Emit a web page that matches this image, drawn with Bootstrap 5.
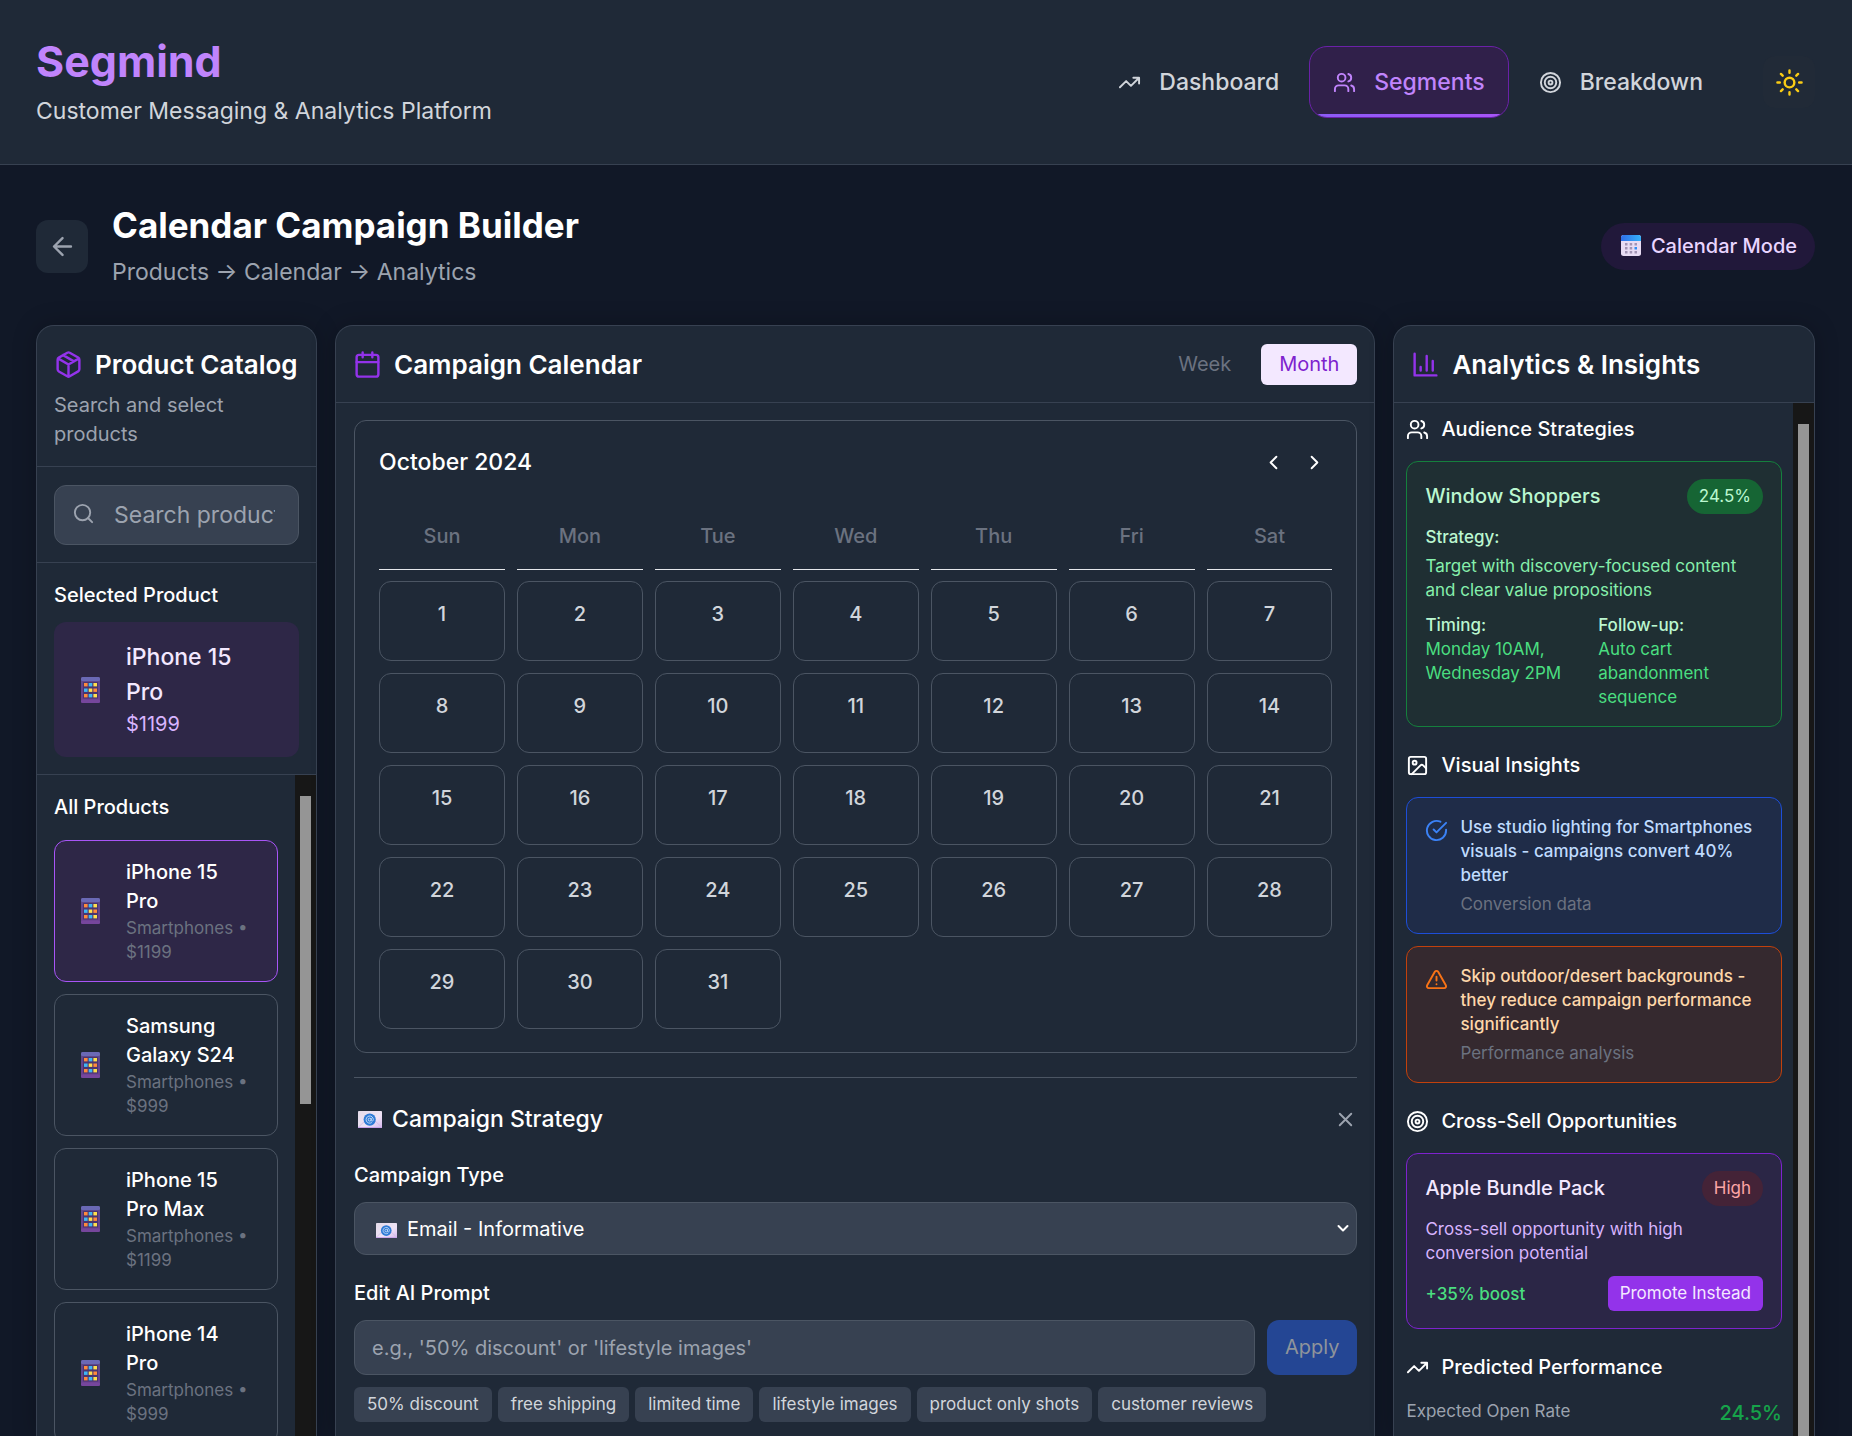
<!DOCTYPE html>
<html lang="en" data-bs-theme="dark">
<head>
<meta charset="utf-8">
<meta name="viewport" content="width=device-width, initial-scale=1">
<title>Segmind</title>
<link href="https://cdn.jsdelivr.net/npm/bootstrap@5.3.0/dist/css/bootstrap.min.css" rel="stylesheet">
<style>
  :root { --line:#374151; --line-2:#4b5563; --panel:#1f2937; --field:#374151; }
  body { font-family:Inter,"Liberation Sans",sans-serif; font-size:23px; line-height:35px; background:#111827; color:#fff; height:100vh; overflow:hidden; }
  h1,h2,h3,h4,p { margin:0; }
  svg { display:block; flex:none; }
  .ico { fill:none; stroke:currentColor; stroke-width:2; stroke-linecap:round; stroke-linejoin:round; }
  .i23 { width:23px; height:23px; }
  .i29 { width:29px; height:29px; }
  .t-sm { font-size:20px; line-height:29px; }
  .t-xs { font-size:17px; line-height:24px; }
  .t-md { font-size:23px; line-height:35px; }
  .t-lg { font-size:26px; line-height:41px; font-weight:600; }
  .gap-6 { gap:6px; } .gap-12 { gap:12px; } .gap-18 { gap:18px; } .gap-24 { gap:24px; }
  .mt-6 { margin-top:6px; } .mt-12 { margin-top:12px; } .mt-17 { margin-top:17px; } .mb-6 { margin-bottom:6px; } .mb-12 { margin-bottom:12px; } .mb-24 { margin-bottom:24px; }
  .c-gray { color:#6b7280; } .c-soft { color:#9ca3af; } .c-light { color:#d1d5db; } .c-violet { color:#9333ea; }
  button { border:0; background:none; color:inherit; padding:0; }

  .site-head { background:#1f2937; border-bottom:1px solid var(--line); padding:35px 37px 35px 36px; }
  .brand { font-size:43px; line-height:53px; font-weight:700; color:#c084fc; }
  .nav-item-link { display:flex; align-items:center; gap:18px; padding:0 23px; border:1px solid transparent; border-radius:18px; color:#d1d5db; font-weight:500; text-decoration:none; position:relative; overflow:hidden; height:72px; }
  .nav-item-link.active { background:#30204a; border-color:#6b21a8; color:#c084fc; }
  .nav-item-link.active::after { content:""; position:absolute; left:0; right:0; bottom:0; height:3px; background:linear-gradient(90deg,#8b5cf6,#a855f7); }
  .theme-btn { width:52px; height:52px; border-radius:12px; background:#212a37; color:#facc15; }
  .head-actions { gap:36px; }

  .main-area { padding:37px 37px 0 36px; gap:35px; min-height:0; }
  .back-btn { width:52px; height:53px; border-radius:12px; background:#1f2937; color:#9ca3af; }
  .page-title { font-size:35px; line-height:47px; font-weight:700; }
  .mode-pill { padding:9px 18px; border-radius:24px; background:#21183a; color:#e9d5ff; font-weight:500; }

  .workspace { min-height:0; }
  .panel { background:var(--panel); border:1px solid var(--line); border-bottom:0; border-radius:18px 18px 0 0; overflow:hidden; min-width:0; box-shadow:0 0 24px rgba(0,0,0,.22); display:flex; flex-direction:column; }
  .panel-l { flex:280 1 0; } .panel-m { flex:1042 1 0; } .panel-r { flex:421 1 0; }
  .sect { padding:18px 17px 17px; border-bottom:1px solid var(--line); }
  .field { background:var(--field); border:1px solid var(--line-2); border-radius:12px; color:#fff; width:100%; outline:0; }
  .field::placeholder { color:#9ca3af; opacity:1; }
  .search-wrap { position:relative; }
  .search-wrap .field { height:60px; padding:0 23px 0 59px; }
  .search-wrap svg { position:absolute; left:18px; top:17px; color:#9ca3af; }
  .picked { background:#2e2747; border-radius:12px; padding:18px 30px 18px 18px; color:#f3e8ff; font-weight:500; }
  .emoji-slot { width:36px; display:flex; justify-content:center; flex:none; }
  .prod { border:1px solid var(--line-2); border-radius:12px; padding:17px 22px 17px 17px; width:100%; text-align:left; flex:none; }
  .prod.active { border-color:#a855f7; background:#2e2747; }
  .track { width:21px; flex:none; background:#171717; padding:21px 5px 0; }
  .thumb { background:#959595; }
  .thumb-short { height:308px; }
  .pane { min-width:0; flex:1 1 0; overflow:hidden; }
  .product-list { padding:18px 17px 0; }

  .tab-btn { padding:6px 18px; border-radius:6px; }
  .tab-btn.active { background:#f3e8ff; color:#7e22ce; }
  .cal-body { padding:17px 17px 0 18px; }
  .cal { border:1px solid var(--line-2); border-radius:12px; padding:24px 24px 23px; }
  .cal-nav button { padding:6px; }
  .cal-grid { display:grid; grid-template-columns:repeat(7,1fr); gap:12px; margin-top:24px; }
  .dow { text-align:center; padding:18px 0; border-bottom:1px solid #e5e7eb; font-weight:500; margin-bottom:-1px; }
  .day { height:80px; border:1px solid var(--line-2); border-radius:12px; text-align:center; padding-top:18px; font-weight:500; }
  .strategy { border-top:1px solid var(--line-2); margin-top:24px; padding-top:24px; }
  .strategy-title { gap:10px; padding-left:4px; }
  .select-wrap { position:relative; }
  .select-wrap .field { appearance:none; height:53px; padding:2px 48px 0 52px; }
  .select-wrap .mail { position:absolute; left:22px; top:21px; }
  .select-wrap .chev { position:absolute; right:8px; top:22px; }
  .prompt-row .field { height:55px; padding:0 17px; }
  .apply-btn { background:#244694; color:#8f949b; border-radius:12px; padding:0 18px; }
  .chip-btn { background:var(--field); color:#d1d5db; border-radius:6px; padding:6px 13px; line-height:23px; }

  .insights { padding:12px 11px 0 12px; }
  .tile { border:1px solid; border-radius:12px; padding:17px 18px; }
  .tile p + p { margin-top:5px; }
  .tile-gap { margin-top:11px; }
  .tile-green { background:#1f2f33; border-color:#15803d; color:#bbf7d0; }
  .tile-blue { background:#1f2c48; border-color:#1d4ed8; color:#bfdbfe; }
  .tile-blue .ico { color:#3b82f6; }
  .tile-orange { background:#35292f; border-color:#c2410c; color:#fed7aa; }
  .tile-orange .ico { color:#f97316; }
  .tile-purple { background:#2b2646; border-color:#7e22ce; color:#f3e8ff; }
  .pill { border-radius:18px; padding:6px 12px; line-height:23px; }
  .pill-green { background:#166534; } .pill-red { background:#442337; color:#fca5a5; }
  .promote { background:#9333ea; border-radius:6px; padding:6px 12px; line-height:23px; color:#f3e8ff; }
  .g3 { color:#86efac; } .g4 { color:#4ade80; } .g6 { color:#16a34a; } .p3 { color:#d8b4fe; }
</style>
<script src="https://cdn.jsdelivr.net/npm/bootstrap@5.3.0/dist/js/bootstrap.bundle.min.js"></script>
</head>
<body class="d-flex flex-column">
<svg width="0" height="0" class="position-absolute" aria-hidden="true">
  <defs>
    <linearGradient id="gBody" x1="0" y1="0" x2="0" y2="1"><stop offset="0" stop-color="#5b4a8a"/><stop offset="1" stop-color="#6b3f8f"/></linearGradient>
    <linearGradient id="gMail" x1="0" y1="0" x2="1" y2="1"><stop offset="0" stop-color="#e3dbe9"/><stop offset=".6" stop-color="#efe3f6"/><stop offset="1" stop-color="#d5b8ee"/></linearGradient>
    <linearGradient id="gCal" x1="0" y1="0" x2="1" y2="0"><stop offset="0" stop-color="#2f6fe8"/><stop offset="1" stop-color="#35b0f8"/></linearGradient>
  </defs>
  <symbol id="trend" viewBox="0 0 24 24"><path d="M22 7l-8.500 8.500-5-5L2 17M16 7h6v6"/></symbol>
  <symbol id="users" viewBox="0 0 24 24"><path d="M16 21v-2a4 4 0 0 0-4-4H6a4 4 0 0 0-4 4v2"/><circle cx="9" cy="7" r="4"/><path d="M22 21v-2a4 4 0 0 0-3-3.870M16 3.130a4 4 0 0 1 0 7.750"/></symbol>
  <symbol id="target" viewBox="0 0 24 24"><circle cx="12" cy="12" r="10"/><circle cx="12" cy="12" r="6"/><circle cx="12" cy="12" r="2"/></symbol>
  <symbol id="phone" viewBox="0 0 19 26"><rect x="0" y="0" width="19" height="26" rx="2" fill="url(#gBody)"/><rect x="0" y="0" width="19" height="4" rx="1.500" fill="#6a69b5"/><rect x="0" y="22.500" width="19" height="3.500" rx="1.500" fill="#76469c"/><rect x="2" y="5" width="15" height="16.500" fill="#4a3570"/>
    <g fill="#ff8a3c"><rect x="3" y="6" width="3.600" height="3.400"/><rect x="12.400" y="11.500" width="3.600" height="3.400"/><rect x="3" y="17" width="3.600" height="3.400"/></g>
    <g fill="#3fb6f5"><rect x="7.700" y="6" width="3.600" height="3.400"/><rect x="3" y="11.500" width="3.600" height="3.400"/><rect x="7.700" y="17" width="3.600" height="3.400"/></g>
    <g fill="#ffdf4d"><rect x="12.400" y="6" width="3.600" height="3.400"/><rect x="7.700" y="11.500" width="3.600" height="3.400"/><rect x="12.400" y="17" width="3.600" height="3.400"/></g></symbol>
  <symbol id="mail" viewBox="0 0 24 17"><rect width="24" height="17" rx=".8" fill="url(#gMail)"/><path d="M0 16.500L9 8M24 16.500L15 8" stroke="#cdb5e2" stroke-width=".7" fill="none"/><rect y="16" width="24" height="1" fill="#c9a2ea"/><circle cx="11.700" cy="8.600" r="6.100" fill="#2f7bd6"/><circle cx="11.700" cy="8.600" r="1.500" fill="none" stroke="#cfe2fb" stroke-width=".9"/><path d="M13.200 7v2.200c0 1.500 2.100 1.200 2.100-.6a3.600 3.600 0 1 0-1.500 2.900" fill="none" stroke="#cfe2fb" stroke-width=".9"/></symbol>
</svg>

<header class="site-head d-flex justify-content-between align-items-center">
  <div>
    <div class="brand">Segmind</div>
    <p class="c-light mt-6">Customer Messaging &amp; Analytics Platform</p>
  </div>
  <div class="head-actions d-flex align-items-center">
    <nav class="d-flex gap-6">
      <a class="nav-item-link" href="#"><svg class="ico i23"><use href="#trend"/></svg>Dashboard</a>
      <a class="nav-item-link active" href="#" aria-current="page"><svg class="ico i23"><use href="#users"/></svg>Segments</a>
      <a class="nav-item-link" href="#"><svg class="ico i23"><use href="#target"/></svg>Breakdown</a>
    </nav>
    <button class="theme-btn d-flex align-items-center justify-content-center" type="button" aria-label="Toggle theme"><svg class="ico i29" viewBox="0 0 24 24"><circle cx="12" cy="12" r="4"/><path d="M12 2v2M12 20v2M4.930 4.930l1.410 1.410M17.660 17.660l1.410 1.410M2 12h2M20 12h2M6.340 17.660l-1.410 1.410M19.070 4.930l-1.410 1.410"/></svg></button>
  </div>
</header>

<main class="main-area d-flex flex-column flex-fill">
  <div class="d-flex align-items-center justify-content-between">
    <div class="d-flex align-items-center gap-4">
      <button class="back-btn d-flex align-items-center justify-content-center" type="button" aria-label="Back"><svg class="ico i29" viewBox="0 0 24 24"><path d="M12 19l-7-7 7-7M19 12H5"/></svg></button>
      <div>
        <h1 class="page-title">Calendar Campaign Builder</h1>
        <p class="c-soft mt-6">Products → Calendar → Analytics</p>
      </div>
    </div>
    <div class="mode-pill t-sm d-flex align-items-center gap-2">
      <svg width="24" height="22" viewBox="0 0 24 22"><rect x="2" y="0" width="20" height="21" rx="2.500" fill="#e8dcf3"/><path d="M2 6V2.500A2.500 2.500 0 0 1 4.500 0h15A2.500 2.500 0 0 1 22 2.500V6z" fill="url(#gCal)"/><g fill="#a294b4"><path d="M6 8h2.500v2.500H6zM10.700 8h2.500v2.500h-2.500zM15.500 8H18v2.500h-2.500zM6 12h2.500v2.500H6zM10.700 12h2.500v2.500h-2.500zM6 16h2.500v2.500H6zM10.700 16h2.500v2.500h-2.500zM15.500 16H18v2.500h-2.500z"/></g><rect x="15.500" y="12" width="2.500" height="2.500" fill="#2f8df5"/></svg>
      Calendar Mode
    </div>
  </div>

  <div class="workspace d-flex flex-fill gap-18">
    <!-- Product catalog -->
    <section class="panel panel-l">
      <div class="sect">
        <div class="d-flex align-items-center gap-12">
          <svg class="ico i29 c-violet" viewBox="0 0 24 24"><path d="M16.500 9.400l-9-5.190M21 16V8a2 2 0 0 0-1-1.730l-7-4a2 2 0 0 0-2 0l-7 4A2 2 0 0 0 3 8v8a2 2 0 0 0 1 1.730l7 4a2 2 0 0 0 2 0l7-4A2 2 0 0 0 21 16zM3.270 6.960L12 12.010l8.730-5.050M12 22.080V12"/></svg>
          <h2 class="t-lg text-nowrap">Product Catalog</h2>
        </div>
        <p class="t-sm c-soft mt-6">Search and select products</p>
      </div>
      <div class="sect">
        <div class="search-wrap">
          <svg class="ico i23" viewBox="0 0 24 24"><circle cx="11" cy="11" r="8"/><path d="M21 21l-4.350-4.350"/></svg>
          <input class="field" type="text" placeholder="Search products..." aria-label="Search products">
        </div>
      </div>
      <div class="sect">
        <h3 class="t-sm fw-medium">Selected Product</h3>
        <div class="picked d-flex align-items-center gap-18 mt-12">
          <span class="emoji-slot"><svg width="19" height="26"><use href="#phone"/></svg></span>
          <div><div>iPhone 15 Pro</div><div class="t-sm p3 fw-normal">$1199</div></div>
        </div>
      </div>
      <div class="d-flex flex-fill overflow-hidden">
        <div class="pane product-list d-flex flex-column gap-12">
          <h3 class="t-sm fw-medium mb-6">All Products</h3>
          <button type="button" class="prod active d-flex align-items-center gap-18"><span class="emoji-slot"><svg width="19" height="26"><use href="#phone"/></svg></span><span class="d-block"><span class="d-block t-sm fw-medium">iPhone 15 Pro</span><span class="d-block t-xs c-gray">Smartphones • $1199</span></span></button>
          <button type="button" class="prod d-flex align-items-center gap-18"><span class="emoji-slot"><svg width="19" height="26"><use href="#phone"/></svg></span><span class="d-block"><span class="d-block t-sm fw-medium">Samsung Galaxy S24</span><span class="d-block t-xs c-gray">Smartphones • $999</span></span></button>
          <button type="button" class="prod d-flex align-items-center gap-18"><span class="emoji-slot"><svg width="19" height="26"><use href="#phone"/></svg></span><span class="d-block"><span class="d-block t-sm fw-medium">iPhone 15 Pro Max</span><span class="d-block t-xs c-gray">Smartphones • $1199</span></span></button>
          <button type="button" class="prod d-flex align-items-center gap-18"><span class="emoji-slot"><svg width="19" height="26"><use href="#phone"/></svg></span><span class="d-block"><span class="d-block t-sm fw-medium">iPhone 14 Pro</span><span class="d-block t-xs c-gray">Smartphones • $999</span></span></button>
        </div>
        <div class="track" aria-hidden="true"><div class="thumb thumb-short"></div></div>
      </div>
    </section>

    <!-- Campaign calendar -->
    <section class="panel panel-m">
      <div class="sect d-flex align-items-center justify-content-between">
        <div class="d-flex align-items-center gap-12">
          <svg class="ico i29 c-violet" viewBox="0 0 24 24"><path d="M8 2v4M16 2v4"/><rect x="3" y="4" width="18" height="18" rx="2"/><path d="M3 10h18"/></svg>
          <h2 class="t-lg">Campaign Calendar</h2>
        </div>
        <div class="d-flex gap-12 t-sm">
          <button type="button" class="tab-btn c-gray">Week</button>
          <button type="button" class="tab-btn active">Month</button>
        </div>
      </div>
      <div class="cal-body">
        <div class="cal">
          <div class="d-flex align-items-center justify-content-between">
            <h3 class="t-md fw-medium">October 2024</h3>
            <div class="cal-nav d-flex gap-6">
              <button type="button" aria-label="Previous month"><svg class="ico i23" viewBox="0 0 24 24"><path d="M15 18l-6-6 6-6"/></svg></button>
              <button type="button" aria-label="Next month"><svg class="ico i23" viewBox="0 0 24 24"><path d="M9 18l6-6-6-6"/></svg></button>
            </div>
          </div>
          <div class="cal-grid t-sm" id="grid">
            <div class="dow c-gray">Sun</div><div class="dow c-gray">Mon</div><div class="dow c-gray">Tue</div><div class="dow c-gray">Wed</div><div class="dow c-gray">Thu</div><div class="dow c-gray">Fri</div><div class="dow c-gray">Sat</div>
          </div>
        </div>
        <div class="strategy">
          <div class="d-flex align-items-center justify-content-between mb-24">
            <h3 class="strategy-title t-md fw-medium d-flex align-items-center"><svg width="24" height="17"><use href="#mail"/></svg>Campaign Strategy</h3>
            <button type="button" class="c-soft" aria-label="Close"><svg class="ico i23" viewBox="0 0 24 24"><path d="M18 6L6 18M6 6l12 12"/></svg></button>
          </div>
          <div class="mb-24">
            <label class="t-sm fw-medium d-block mb-12" for="ctype">Campaign Type</label>
            <div class="select-wrap">
              <select id="ctype" class="field t-sm"><option>Email - Informative</option></select>
              <svg class="mail" width="21" height="15"><use href="#mail"/></svg>
              <svg class="ico chev" width="12" height="9" viewBox="0 0 12 9"><path d="M1.500 2L6 6.500 10.500 2"/></svg>
            </div>
          </div>
          <label class="t-sm fw-medium d-block mb-12" for="prompt">Edit AI Prompt</label>
          <div class="prompt-row d-flex gap-12">
            <input id="prompt" class="field t-sm" type="text" placeholder="e.g., '50% discount' or 'lifestyle images'">
            <button type="button" class="apply-btn t-sm">Apply</button>
          </div>
          <div class="d-flex gap-6 mt-12">
            <button type="button" class="chip-btn t-xs">50% discount</button><button type="button" class="chip-btn t-xs">free shipping</button><button type="button" class="chip-btn t-xs">limited time</button><button type="button" class="chip-btn t-xs">lifestyle images</button><button type="button" class="chip-btn t-xs">product only shots</button><button type="button" class="chip-btn t-xs">customer reviews</button>
          </div>
        </div>
      </div>
    </section>

    <!-- Analytics and insights -->
    <section class="panel panel-r">
      <div class="sect d-flex align-items-center gap-12">
        <svg class="ico i29 c-violet" viewBox="0 0 24 24"><path d="M3 3v18h18M18 17V9M13 17V5M8 17v-3"/></svg>
        <h2 class="t-lg">Analytics &amp; Insights</h2>
      </div>
      <div class="d-flex flex-fill overflow-hidden">
        <div class="pane insights d-flex flex-column gap-24">
          <div>
            <h3 class="t-sm fw-medium d-flex align-items-center gap-12"><svg class="ico i23"><use href="#users"/></svg>Audience Strategies</h3>
            <div class="tile tile-green t-xs mt-17">
              <div class="d-flex justify-content-between align-items-center"><span class="t-sm fw-medium">Window Shoppers</span><span class="pill pill-green">24.5%</span></div>
              <p class="fw-medium tile-gap">Strategy:</p>
              <p class="g3">Target with discovery-focused content and clear value propositions</p>
              <div class="row g-0 tile-gap">
                <div class="col-6"><div class="fw-medium">Timing:</div><div class="g4">Monday 10AM, Wednesday 2PM</div></div>
                <div class="col-6 ps-1"><div class="fw-medium">Follow-up:</div><div class="g4">Auto cart abandonment sequence</div></div>
              </div>
            </div>
          </div>
          <div>
            <h3 class="t-sm fw-medium d-flex align-items-center gap-12"><svg class="ico i23" viewBox="0 0 24 24"><rect x="3" y="3" width="18" height="18" rx="2"/><circle cx="9" cy="9" r="2"/><path d="M21 15l-3.090-3.090a2 2 0 0 0-2.820 0L6 21"/></svg>Visual Insights</h3>
            <div class="d-flex flex-column gap-12 mt-17">
              <div class="tile tile-blue t-xs d-flex gap-12">
                <svg class="ico i23 mt-1" viewBox="0 0 24 24"><path d="M22 11.080V12a10 10 0 1 1-5.930-9.140M22 4L12 14.010l-3-3"/></svg>
                <div><p class="fw-medium">Use studio lighting for Smartphones visuals - campaigns convert 40% better</p><p class="c-gray">Conversion data</p></div>
              </div>
              <div class="tile tile-orange t-xs d-flex gap-12">
                <svg class="ico i23 mt-1" viewBox="0 0 24 24"><path d="M21.730 18l-8-14a2 2 0 0 0-3.480 0l-8 14A2 2 0 0 0 4 21h16a2 2 0 0 0 1.730-3zM12 9v4M12 17h.01"/></svg>
                <div><p class="fw-medium">Skip outdoor/desert backgrounds - they reduce campaign performance significantly</p><p class="c-gray">Performance analysis</p></div>
              </div>
            </div>
          </div>
          <div>
            <h3 class="t-sm fw-medium d-flex align-items-center gap-12"><svg class="ico i23"><use href="#target"/></svg>Cross-Sell Opportunities</h3>
            <div class="tile tile-purple t-xs mt-17">
              <div class="d-flex justify-content-between align-items-center"><span class="t-sm fw-medium">Apple Bundle Pack</span><span class="pill pill-red">High</span></div>
              <p class="p3 tile-gap">Cross-sell opportunity with high conversion potential</p>
              <div class="d-flex justify-content-between align-items-center tile-gap"><span class="g4 fw-medium">+35% boost</span><button type="button" class="promote">Promote Instead</button></div>
            </div>
          </div>
          <div>
            <h3 class="t-sm fw-medium d-flex align-items-center gap-12"><svg class="ico i23"><use href="#trend"/></svg>Predicted Performance</h3>
            <div class="d-flex justify-content-between mt-17"><span class="t-xs c-soft">Expected Open Rate</span><span class="t-sm g6 fw-medium">24.5%</span></div>
          </div>
        </div>
        <div class="track d-flex" aria-hidden="true"><div class="thumb flex-fill"></div></div>
      </div>
    </section>
  </div>
</main>
<script>
  const grid = document.getElementById('grid');
  for (let d = 1; d <= 31; d++) {
    const b = document.createElement('div');
    b.className = 'day c-light';
    b.textContent = d;
    grid.appendChild(b);
  }
</script>
</body>
</html>
